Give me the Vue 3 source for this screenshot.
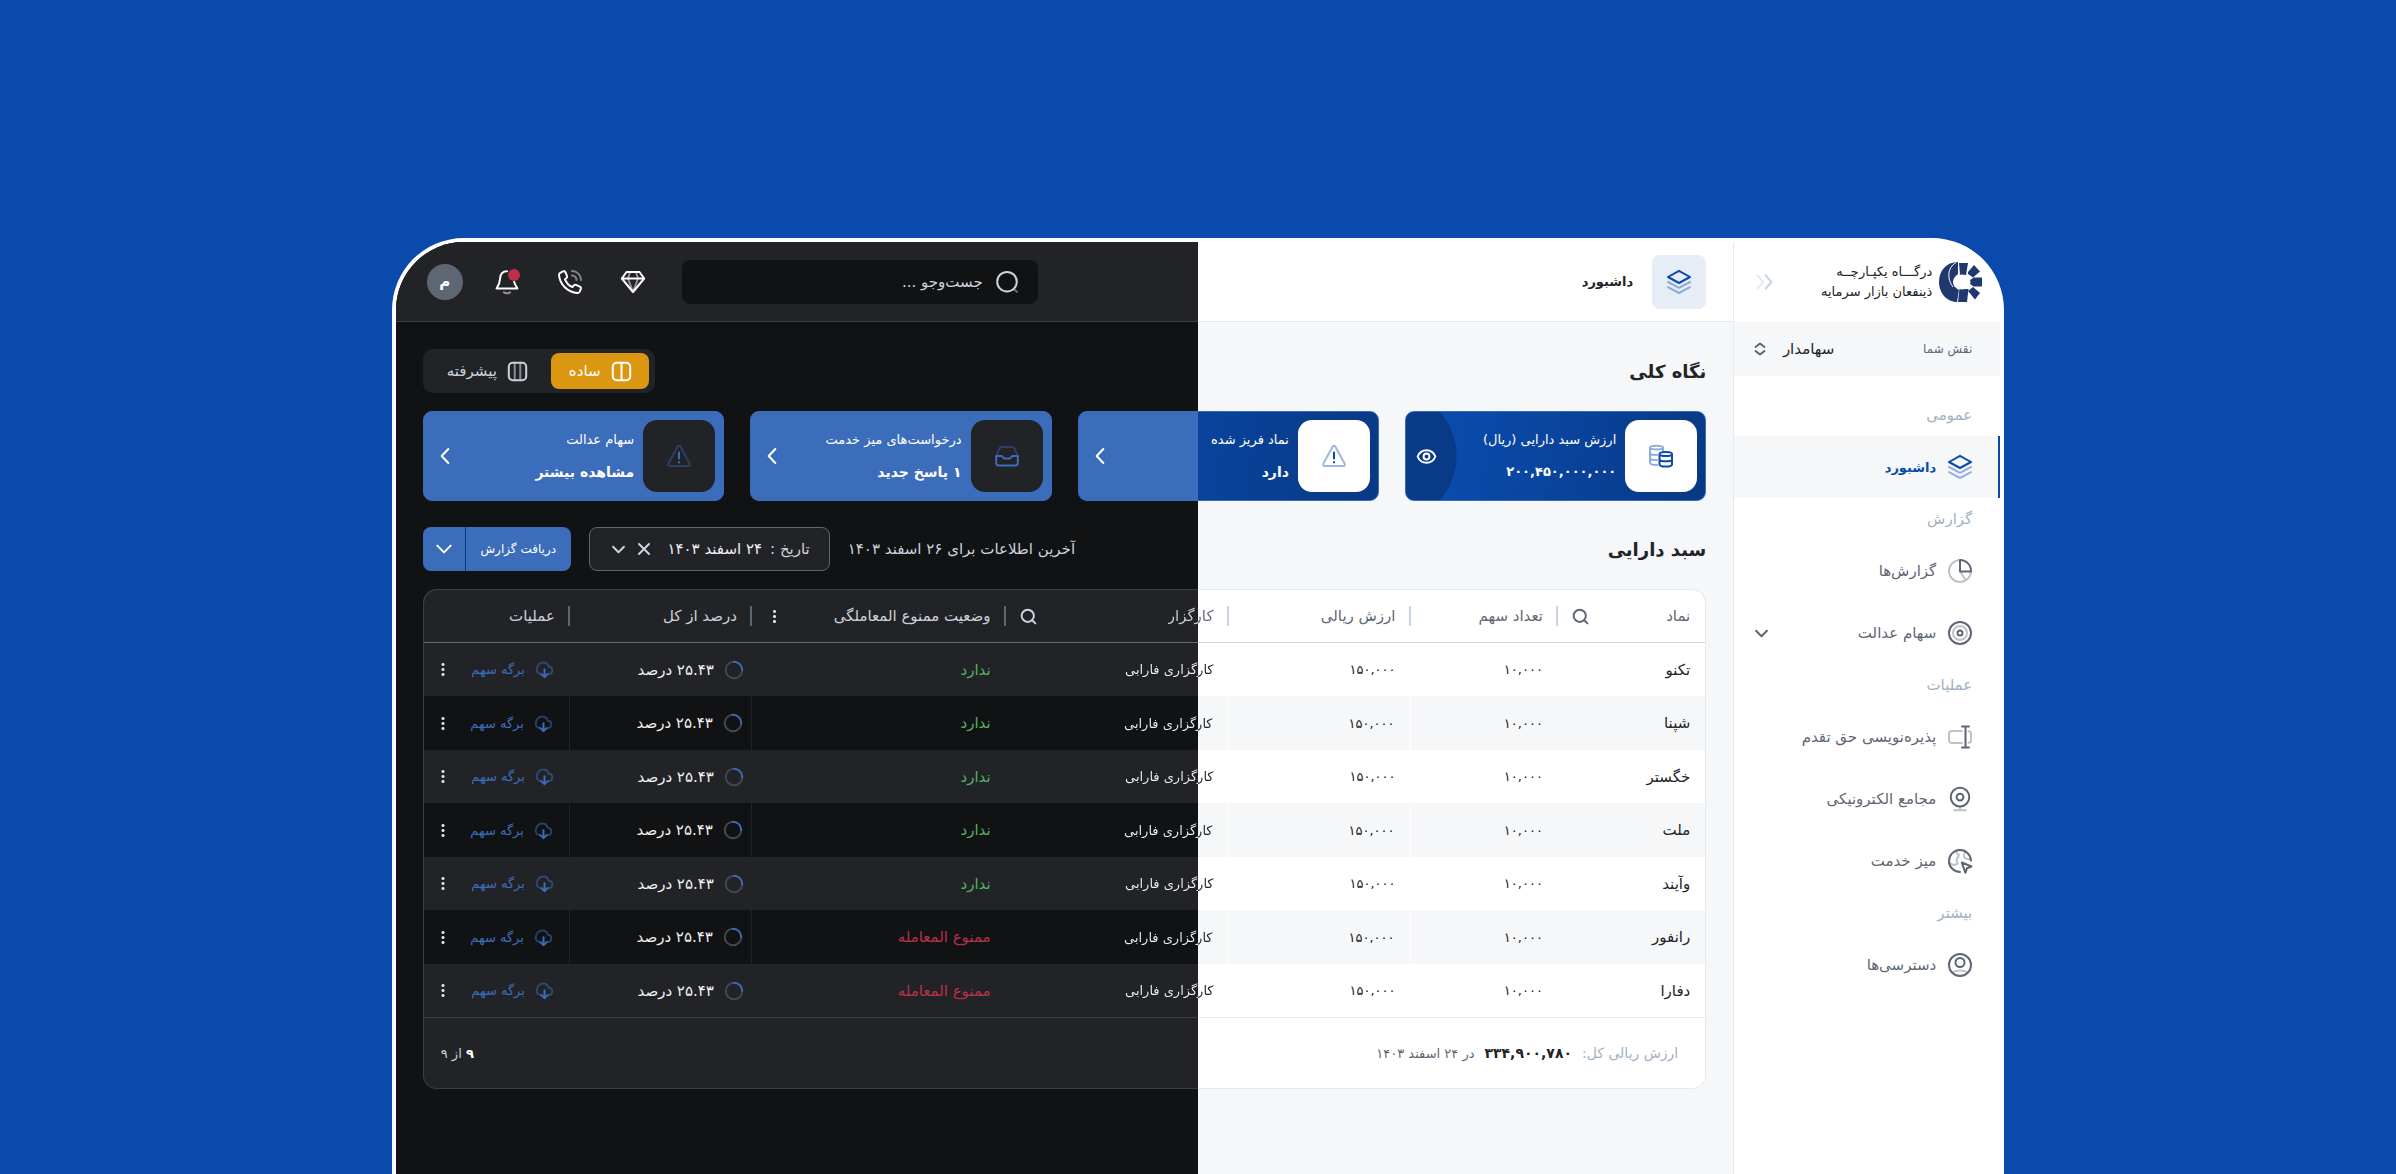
<script setup>
import { h, ref } from 'vue'

// Each icon is a list of shapes on a 24-unit grid; `o` marks the faded duotone strokes.
const shapes = {
  layers: [
    { d: 'M12 .8 23 7 12 13 1 7Z' },
    { d: 'M1 12l11 5.8L23 12M1 17.2 12 23l11-5.8', o: 0.4 }
  ],
  pie: [
    { d: 'M12 1a11 11 0 1 0 11 11M12 12l5.6 9.2', o: 0.4 },
    { d: 'M12 1v11.5h11A11 11 0 0 0 12 1Z' }
  ],
  target: [
    { d: 'M12 5a7 7 0 1 0 0 14 7 7 0 0 0 0-14Z', o: 0.4 },
    { d: 'M12 1a11 11 0 1 0 0 22 11 11 0 0 0 0-22ZM12 9.5a2.5 2.5 0 1 0 0 5 2.5 2.5 0 0 0 0-5Z' }
  ],
  rename: [
    { d: 'M14 6H3.5A2.5 2.5 0 0 0 1 8.500v7A2.500 2.500 0 0 0 3.500 18H14M20.500 6.200A2.500 2.500 0 0 1 23 8.700v6.600a2.500 2.500 0 0 1-2.500 2.500', o: 0.4 },
    { d: 'M17.500 1.800v20.500M14 1.500h7M14 22.500h7' }
  ],
  webcam: [
    { d: 'M12 20v3M6 23.300h12', o: 0.4 },
    { d: 'M12 .8a9.300 9.300 0 1 0 0 18.600A9.300 9.300 0 0 0 12 .8ZM12 6.700a3.400 3.400 0 1 0 0 6.800 3.400 3.400 0 0 0 0-6.800Z' }
  ],
  globe: [
    { d: 'M7.500 2.300 11 6.500 8.500 10.500l1 4.500-4 1-4-1.500M17.500 3c-2.500 2.500-2 5.500.5 6.500l4 1', o: 0.4 },
    { d: 'M23 11.500A11 11 0 1 0 12 23M13.800 13.500l9.700 4-4.500 1.700-1.600 4.600Z' }
  ],
  user: [
    { d: 'M5 19c3-2 11-2 14 0', o: 0.4 },
    { d: 'M12 1a11 11 0 1 0 0 22 11 11 0 0 0 0-22ZM12 5a4.500 4.500 0 1 0 0 9 4.500 4.500 0 0 0 0-9Z' }
  ],
  gem: [
    { d: 'M9 2 7 8.500 12 22l5-13.500L15 2', o: 0.5 },
    { d: 'M5.500 2h13L23.200 8.500 12 22 .8 8.500ZM1 8.500h22' }
  ],
  phone: [
    { d: 'M14 1a9 9 0 0 1 9 9M14 5.500a4.500 4.500 0 0 1 4.500 4.500', o: 0.45 },
    { d: 'M2.600 2.700 5 1.400c1-.5 2-.1 2.400.8L9 6c.3.8.1 1.600-.5 2.100L7 9.300c1.300 3.500 4 6.300 7.500 7.700l1.400-1.600c.5-.6 1.300-.8 2.100-.5l3.800 1.700c.9.4 1.300 1.300 1 2.200l-1 2.700c-.4 1-1.200 1.600-2.300 1.500C9.500 22.300 1.700 14.500 1 4.800c0-.9.700-1.700 1.600-2.100Z' }
  ],
  bell: [
    { d: 'M8.800 22.300c1.600 1.400 4.800 1.400 6.400 0', o: 0.5 },
    { d: 'M12 1.200C8 1.200 5.500 4 5.200 8c-.2 4-1 6.500-3.600 10.500h20.800C20.800 16 19.700 14 19.200 12' }
  ],
  search: [
    { d: 'M20 20l2.800 2.800', o: 0.5 },
    { d: 'M12 1a10.700 10.700 0 1 0 0 21.400A10.700 10.700 0 0 0 12 1Z' }
  ],
  find: [{ d: 'M10.800 1a9.800 9.800 0 1 0 0 19.600 9.800 9.800 0 0 0 0-19.600ZM18 18l5 5' }],
  alert: [
    { d: 'M10.700 2.500c.6-1 2-1 2.600 0l9.400 17.300c.6 1-.1 2.200-1.300 2.200H2.600c-1.200 0-1.900-1.200-1.300-2.200Z', o: 0.4 },
    { d: 'M12 8.500v6M12 18v.6' }
  ],
  inbox: [
    { d: 'M1.200 12 4.500 4.500C5 3.400 5.800 3 7 3h10c1.200 0 2 .4 2.500 1.500L22.800 12', o: 0.4 },
    { d: 'M1.200 12h5.300c1.200 0 1.300 2.500 3 2.500h5c1.700 0 1.800-2.500 3-2.500h5.300v7c0 1.500-1 2.500-2.500 2.500H3.700c-1.500 0-2.500-1-2.500-2.500Z' }
  ],
  coins: [
    { d: 'M1 3.500C1 1 14 1 14 3.500S1 6 1 3.500v15C1 20 4 21 8 21M14 3.500V7M1 8.500C1 10.500 5 11 8 11M1 13.500c0 2 4 2.500 7 2.500', o: 0.45 },
    { d: 'M10.500 10c0-2.800 12.500-2.800 12.500 0s-12.500 2.800-12.500 0v10.500c0 2.800 12.500 2.800 12.500 0V10M10.500 15.200c0 2.800 12.500 2.800 12.500 0' }
  ],
  eye: [{ d: 'M.8 12C5 1.500 19 1.500 23.200 12 19 22.500 5 22.500.8 12ZM12 8.300a3.700 3.700 0 1 0 0 7.400 3.700 3.700 0 0 0 0-7.400Z' }],
  split: [{ d: 'M6 1h12a5 5 0 0 1 5 5v12a5 5 0 0 1-5 5H6a5 5 0 0 1-5-5V6a5 5 0 0 1 5-5ZM12 1v22' }],
  columns: [
    { d: 'M8.500 1v22M15.500 1v22', o: 0.6 },
    { d: 'M6 1h12a5 5 0 0 1 5 5v12a5 5 0 0 1-5 5H6a5 5 0 0 1-5-5V6a5 5 0 0 1 5-5Z' }
  ],
  cloud: [
    { d: 'M7 18.500c-3.500 0-6-2.500-6-6C1 6 5.500 2 10.500 2c4 0 6.500 2.500 7.500 6 3 0 5 2 5 5 0 3.500-2.500 5.500-5.500 5.500', o: 0.5 },
    { d: 'M12 11.500V23M7.500 18.500 12 22.800l4.500-4.300' }
  ],
  down: [{ d: 'M2 7l10 10L22 7' }],
  left: [{ d: 'M17 1.500 7 12l10 10.500' }],
  close: [{ d: 'M2 2l20 20M22 2 2 22' }],
  updown: [{ d: 'M3 8l9-7 9 7M3 16l9 7 9-7' }],
  collapse: [{ d: 'M4 4l7 8-7 8', o: 0.5 }, { d: 'M14 4l7 8-7 8' }],
  ring: [
    { d: 'M12 1a11 11 0 1 0 11 11', c: '#43474e' },
    { d: 'M12 1a11 11 0 0 1 11 11', c: '#3c6dbb' }
  ]
}

const Icon = (p) =>
  h(
    'svg',
    { viewBox: '0 0 24 24', width: p.size, height: p.size, fill: 'none', 'stroke-linecap': 'round', 'stroke-linejoin': 'round', 'aria-hidden': 'true', overflow: 'visible' },
    shapes[p.name].map((s) =>
      h('path', { d: s.d, stroke: s.c || 'currentColor', 'stroke-opacity': s.o || 1, 'stroke-width': (p.weight * 24) / p.size })
    )
  )
Icon.props = { name: String, size: { default: 24 }, weight: { default: 2 } }

const groups = [
  { label: 'عمومی', items: [{ icon: 'layers', text: 'داشبورد', active: true }] },
  { label: 'گزارش', items: [{ icon: 'pie', text: 'گزارش‌ها' }, { icon: 'target', text: 'سهام عدالت', more: true }] },
  {
    label: 'عملیات',
    items: [
      { icon: 'rename', text: 'پذیره‌نویسی حق تقدم' },
      { icon: 'webcam', text: 'مجامع الکترونیکی' },
      { icon: 'globe', text: 'میز خدمت' }
    ]
  },
  { label: 'بیشتر', items: [{ icon: 'user', text: 'دسترسی‌ها' }] }
]

const cards = [
  { icon: 'coins', title: 'ارزش سبد دارایی (ریال)', value: '۲۰۰,۴۵۰,۰۰۰,۰۰۰', eye: true },
  { icon: 'alert', title: 'نماد فریز شده', value: 'دارد' },
  { icon: 'inbox', title: 'درخواست‌های میز خدمت', value: '۱ پاسخ جدید', dark: true },
  { icon: 'alert', title: 'سهام عدالت', value: 'مشاهده بیشتر', dark: true }
]

const columns = [
  { text: 'نماد', width: '11.5%', find: true },
  { text: 'تعداد سهم', width: '11.5%' },
  { text: 'ارزش ریالی', width: '14.2%' },
  { text: 'کارگزار', width: '17.4%', find: true, split: true },
  { text: 'وضعیت ممنوع المعاملگی', width: '19.8%', menu: true, dark: true },
  { text: 'درصد از کل', width: '14.2%', dark: true },
  { text: 'عملیات', width: '11.4%', dark: true }
]

const rows = ['تکنو', 'شپنا', 'خگستر', 'ملت', 'وآیند', 'رانفور', 'دفارا'].map((name, i) => ({ name, banned: i > 4 }))
const query = ref('')
const mode = ref('simple')
</script>

<template>
  <div class="page" dir="rtl" lang="fa">
    <div class="window">
      <aside class="sidebar">
        <div class="brand">
          <svg class="logo" viewBox="0 0 43 40" width="43" height="40" aria-hidden="true">
            <g fill="#20376f">
              <path d="M19 0C7 0 0 9 0 20s8 20 18 20l2-12c-4-2-6-5-6-8s2-6 5-8Z" />
              <path d="M20 1h9l-2 12h-6Z" />
              <path d="M29 10 35 3l6 6.500-7 6-5-3.500Z" />
              <path d="M34.500 15.500H43v9h-8.500l-4-3v-3Z" />
              <path d="M34 25l7 6-5 6.500-7-8.500Z" />
              <path d="M20.500 27h9L28 40h-9Z" />
            </g>
            <path d="M17 .5C8 6 8 17 14 25" fill="none" stroke="#fff" />
            <ellipse cx="23" cy="20" rx="8.500" ry="7.500" fill="#fff" />
          </svg>
          <div class="brand-name">
            <span>درگـــاه یکپـارچــه</span>
            <span>ذینفعان بازار سرمایه</span>
          </div>
          <button class="bare collapse" type="button" aria-label="جمع کردن منو"><Icon name="collapse" :size="20" /></button>
        </div>
        <div class="role">
          <label for="role">نقش شما</label>
          <div class="role-field">
            <select id="role" class="bare-select"><option>سهامدار</option></select>
            <Icon name="updown" :size="12" />
          </div>
        </div>
        <nav>
          <section v-for="g in groups" :key="g.label">
            <h3>{{ g.label }}</h3>
            <a v-for="i in g.items" :key="i.text" href="#" :class="{ active: i.active }">
              <Icon :name="i.icon" :size="24" />
              <span>{{ i.text }}</span>
              <Icon v-if="i.more" class="more" name="down" :size="13" />
            </a>
          </section>
        </nav>
      </aside>

      <div class="main">
        <header class="topbar">
          <div class="crumb"><Icon name="layers" :size="24" /></div>
          <h1>داشبورد</h1>
          <label class="search">
            <Icon name="search" :size="22" />
            <input v-model="query" type="search" placeholder="جست‌وجو ..." aria-label="جست‌وجو" />
          </label>
          <div class="tools">
            <button class="bare" type="button" aria-label="امتیاز"><Icon name="gem" :size="24" /></button>
            <button class="bare" type="button" aria-label="تماس"><Icon name="phone" :size="24" /></button>
            <button class="bare bell" type="button" aria-label="اعلان‌ها"><Icon name="bell" :size="24" /><i></i></button>
          </div>
          <button class="avatar" type="button">م</button>
        </header>

        <main class="content">
          <div class="heading">
            <h2>نگاه کلی</h2>
            <div class="toggle">
              <button type="button" :class="{ on: mode === 'simple' }" @click="mode = 'simple'"><Icon name="split" :size="19" />ساده</button>
              <button type="button" :class="{ on: mode === 'pro' }" @click="mode = 'pro'"><Icon name="columns" :size="19" />پیشرفته</button>
            </div>
          </div>

          <div class="cards">
            <article v-for="c in cards" :key="c.title" class="card" :class="{ dark: c.dark, sum: c.eye }">
              <div class="tile"><Icon :name="c.icon" :size="24" /></div>
              <div class="card-text">
                <p>{{ c.title }}</p>
                <strong>{{ c.value }}</strong>
              </div>
              <button class="bare card-act" type="button" :aria-label="c.title"><Icon :name="c.eye ? 'eye' : 'left'" :size="c.eye ? 19 : 16" /></button>
            </article>
          </div>

          <div class="heading">
            <h2>سبد دارایی</h2>
            <div class="filters">
              <p>آخرین اطلاعات برای ۲۶ اسفند ۱۴۰۳</p>
              <div class="date">
                <label for="date">تاریخ :</label>
                <select id="date" class="bare-select"><option>۲۴ اسفند ۱۴۰۳</option></select>
                <button class="bare" type="button" aria-label="حذف تاریخ"><Icon name="close" :size="12" /></button>
                <Icon name="down" :size="13" />
              </div>
              <div class="report">
                <button type="button">دریافت گزارش</button>
                <button type="button" aria-label="گزینه‌های گزارش"><Icon name="down" :size="16" /></button>
              </div>
            </div>
          </div>

          <div class="sheet">
            <div class="sheet-in">
              <table>
                <colgroup><col v-for="c in columns" :key="c.text" :style="{ width: c.width }" /></colgroup>
                <thead>
                  <tr>
                    <th v-for="c in columns" :key="c.text" scope="col" :class="{ dark: c.dark }">
                      <div class="th">
                        <span :class="{ two: c.split }">{{ c.text }}</span>
                        <Icon v-if="c.find" :class="{ pale: c.split }" name="find" :size="15" />
                        <span v-if="c.menu" class="dots"></span>
                      </div>
                    </th>
                  </tr>
                </thead>
                <tbody>
                  <tr v-for="r in rows" :key="r.name">
                    <td>{{ r.name }}</td>
                    <td class="tight">۱۰,۰۰۰</td>
                    <td class="tight">۱۵۰,۰۰۰</td>
                    <td class="tight"><span class="two ink">کارگزاری فارابی</span></td>
                    <td :class="r.banned ? 'no' : 'ok'">{{ r.banned ? 'ممنوع المعامله' : 'ندارد' }}</td>
                    <td class="share"><div class="cell"><Icon name="ring" :size="18" />۲۵.۴۳ درصد</div></td>
                    <td class="ops">
                      <div class="cell">
                        <a href="#"><Icon name="cloud" :size="17" />برگه سهم</a>
                        <button class="bare" type="button" aria-label="بیشتر"><span class="dots"></span></button>
                      </div>
                    </td>
                  </tr>
                </tbody>
              </table>
              <footer>
                <span class="total">ارزش ریالی کل:</span>
                <strong>۳۳۴,۹۰۰,۷۸۰</strong>
                <span class="when">در ۲۴ اسفند ۱۴۰۳</span>
                <span class="count"><b>۹</b> از ۹</span>
              </footer>
            </div>
          </div>
        </main>
      </div>
    </div>
  </div>
</template>

<style>
body {
  margin: 0;
  background: #094aac;
}
</style>

<style scoped>
/* The left half of the viewport is the dark theme, the right half the light one. */
.page {
  --surface: linear-gradient(90deg, #222327 50%, #ffffff 50%) fixed;
  --canvas: linear-gradient(90deg, #111214 50%, #f6f7f9 50%) fixed;
  --line: linear-gradient(90deg, #3c3e43 50%, #e6e9ee 50%) fixed;
  --rule: linear-gradient(90deg, #636975 50%, #cbd4e1 50%) fixed;
  --label: linear-gradient(90deg, #ccd2dc 50%, #5f6673 50%) fixed;
  --ink: linear-gradient(90deg, #f1f3f5 50%, #222327 50%) fixed;
  display: flex;
  justify-content: center;
  box-sizing: border-box;
  min-height: 100vh;
  padding-top: 238px;
  background: #094aac;
  color: #222327;
  font-family: "DejaVu Sans", sans-serif;
  font-size: 15px;
}
.page * {
  box-sizing: border-box;
}
h1, h2, h3, p {
  margin: 0;
}
button, input, select {
  font: inherit;
  color: inherit;
}
svg {
  flex: none;
}
.window {
  display: flex;
  width: 67.3%;
  padding: 4px 4px 0;
  background: #fff;
  border-radius: 72px 72px 0 0;
}
.bare {
  display: flex;
  padding: 0;
  border: 0;
  background: none;
}
.bare-select {
  padding: 0;
  border: 0;
  background: none;
  appearance: none;
}

/* Sidebar */
.sidebar {
  flex: none;
  width: 267px;
  border-left: 1px solid #e6e9ee;
}
.brand {
  display: flex;
  align-items: center;
  height: 80px;
  padding: 0 18px 0 20px;
}
.brand-name {
  display: flex;
  flex-direction: column;
  margin-right: 7px;
  line-height: 20px;
  font-size: 13px;
  white-space: nowrap;
}
.collapse {
  margin-right: auto;
  color: #cbd4e1;
}
.role {
  display: flex;
  align-items: center;
  justify-content: space-between;
  height: 54px;
  padding: 0 28px 0 20px;
  background: #f6f7f9;
  color: #5f6673;
  font-size: 12px;
}
.role-field {
  display: flex;
  align-items: center;
  gap: 16px;
}
.role-field select {
  color: #222327;
  font-size: 15px;
}
nav {
  padding-top: 18px;
}
nav h3 {
  height: 42px;
  padding-right: 28px;
  color: #a3b0c3;
  font-size: 15px;
  font-weight: 400;
  line-height: 42px;
}
nav a {
  display: flex;
  align-items: center;
  gap: 12px;
  height: 62px;
  padding: 0 28px 0 21px;
  color: #5f6673;
  text-decoration: none;
}
nav a.active {
  padding-right: 26px;
  border-right: 2px solid #094aac;
  background: #f6f7f9;
  color: #094aac;
  font-size: 13px;
  font-weight: 700;
}
.more {
  margin-right: auto;
}

/* Main area */
.main {
  flex: 1;
  display: flex;
  flex-direction: column;
  min-width: 0;
  background: var(--canvas);
  border-top-left-radius: 68px;
  overflow: hidden;
}
.topbar {
  display: flex;
  align-items: center;
  height: 80px;
  padding: 0 27px 0 31px;
  border-bottom: 1px solid transparent;
  background: var(--surface) padding-box, var(--line) border-box;
}
.crumb {
  display: flex;
  align-items: center;
  justify-content: center;
  width: 54px;
  height: 54px;
  border-radius: 8px;
  background: #e6edf7;
  color: #094aac;
}
h1 {
  margin-right: 19px;
  font-size: 13px;
  font-weight: 700;
}
.search {
  display: flex;
  align-items: center;
  gap: 13px;
  width: 356px;
  height: 44px;
  margin-right: auto;
  padding: 0 20px;
  border-radius: 8px;
  background: #111214;
  color: #ccd2dc;
}
.search input {
  flex: 1;
  min-width: 0;
  padding: 0;
  border: 0;
  outline: 0;
  background: none;
}
.search input::placeholder {
  color: #ccd2dc;
  opacity: 1;
}
.tools {
  display: flex;
  gap: 39px;
  margin: 0 37px 0 32px;
  color: #fff;
}
.bell {
  position: relative;
}
.bell i {
  position: absolute;
  top: -1px;
  right: -1px;
  width: 12px;
  height: 12px;
  border-radius: 50%;
  background: #bb304b;
}
.avatar {
  width: 36px;
  height: 36px;
  padding: 0;
  border: 0;
  border-radius: 50%;
  background: #5f6673;
  color: #fff;
  font-weight: 700;
}
.content {
  padding: 27px;
}
.heading {
  display: flex;
  align-items: center;
  justify-content: space-between;
  height: 44px;
}
h2 {
  font-size: 18px;
  font-weight: 700;
}
.toggle {
  display: flex;
  gap: 6px;
  height: 44px;
  padding: 4px 6px;
  border-radius: 10px;
  background: #222327;
}
.toggle button {
  display: flex;
  align-items: center;
  gap: 11px;
  padding: 0 18px;
  border: 0;
  border-radius: 8px;
  background: none;
  color: #ccd2dc;
}
.toggle .on {
  background: #dc9712;
  color: #fff;
}

/* Cards */
.cards {
  display: grid;
  grid-template-columns: repeat(4, 1fr);
  gap: 26px;
  margin: 18px 0 26px;
}
.card {
  display: flex;
  align-items: center;
  height: 90px;
  padding: 0 8px 0 4px;
  border: 1px solid #3c6dbb;
  border-radius: 9px;
  background: linear-gradient(90deg, #3c6dbb 50%, transparent 50%) fixed, linear-gradient(100deg, #0a4aab, #083985);
  color: #fff;
}
.card.sum {
  background: radial-gradient(circle at -16px 50%, #083a88 66px, transparent 67px), linear-gradient(100deg, #0a4aab 20%, #083985);
}
.tile {
  display: flex;
  align-items: center;
  justify-content: center;
  flex: none;
  width: 72px;
  height: 72px;
  border-radius: 14px;
  background: #fff;
  color: #094aac;
}
.card.dark .tile {
  background: #222327;
  color: #3c6dbb;
}
.card-text {
  margin-right: 9px;
  line-height: 32px;
  white-space: nowrap;
}
.card-text p {
  font-size: 13px;
}
.card-text strong {
  display: block;
  font-size: 14px;
}
.card.sum strong {
  font-size: 13px;
}
.card-act {
  justify-content: center;
  width: 34px;
  margin-right: auto;
}

/* Filters */
.filters {
  display: flex;
  align-items: center;
  gap: 18px;
  color: #ccd2dc;
}
.date {
  display: flex;
  align-items: center;
  gap: 8px;
  width: 241px;
  height: 44px;
  padding: 0 19px 0 22px;
  border: 1px solid #5f6673;
  border-radius: 8px;
  background: #222327;
  white-space: nowrap;
}
.date select {
  color: #f1f3f5;
}
.date button {
  margin: 0 auto 0 5px;
}
.report {
  display: flex;
  width: 148px;
  height: 44px;
  border-radius: 8px;
  background: #3c6dbb;
  color: #fff;
  overflow: hidden;
}
.report button {
  display: flex;
  align-items: center;
  justify-content: center;
  flex: 1;
  padding: 0;
  border: 0;
  background: none;
  font-size: 12px;
}
.report button + button {
  flex: none;
  width: 43px;
  border-right: 1px solid #083985;
}

/* Table */
.sheet {
  margin-top: 18px;
  padding: 1px;
  border-radius: 14px;
  background: var(--line);
}
.sheet-in {
  border-radius: 13px;
  background: var(--surface);
  overflow: hidden;
}
table {
  width: 100%;
  border-spacing: 0;
  table-layout: fixed;
}
th, td {
  padding: 0 15px;
  font-weight: 400;
  text-align: right;
  white-space: nowrap;
}
th {
  height: 53px;
  padding: 0 0 0 15px;
  border-bottom: 1px solid transparent;
  background: var(--surface) padding-box, var(--rule) border-box;
  color: #5f6673;
}
.th {
  display: flex;
  align-items: center;
  justify-content: space-between;
  height: 20px;
  padding: 0 13px 0 0;
  border-right: 2px solid #cbd4e1;
}
th:first-child .th {
  border-color: transparent;
}
th.dark {
  color: #ccd2dc;
}
th.dark .th {
  border-color: #5f6673;
}
.pale {
  color: #ccd2dc;
}
.two {
  background: var(--label);
  background-clip: text;
  color: transparent;
}
.two.ink {
  background: var(--ink);
  background-clip: text;
}
td {
  height: 53px;
}
tr:nth-child(even) td {
  height: 54px;
  background: var(--canvas);
}
tr:nth-child(even) td:nth-child(3),
tr:nth-child(even) td:nth-child(4) {
  border-right: 1px solid #fff;
}
tr:nth-child(even) td:nth-child(n + 6) {
  border-right: 1px solid #222327;
}
.tight {
  font-size: 13px;
}
.ok {
  color: #52b45f;
}
.no {
  color: #b8304a;
}
td.share {
  padding-right: 9px;
  color: #f1f3f5;
}
.cell {
  display: flex;
  align-items: center;
  gap: 11px;
}
td.ops {
  padding: 0 17px 0 15px;
}
.ops .cell {
  justify-content: space-between;
}
.ops a {
  display: flex;
  align-items: center;
  gap: 11px;
  color: #3c6dbb;
  font-size: 13px;
  text-decoration: none;
}
.dots {
  width: 8px;
  height: 15px;
  background: radial-gradient(circle, #e2e6ec 1px, transparent 2px) 0 0 / 100% 5px;
}
.th .dots {
  width: 15px;
}
footer {
  display: flex;
  align-items: center;
  gap: 10px;
  height: 71px;
  padding: 0 27px 0 17px;
  border-top: 1px solid transparent;
  background: var(--surface) padding-box, var(--line) border-box;
  font-size: 14px;
}
.total {
  color: #a3b0c3;
}
.when {
  color: #5f6673;
  font-size: 13px;
}
.count {
  margin-right: auto;
  color: #ccd2dc;
  font-size: 13px;
}
.count b {
  color: #fff;
}
</style>
